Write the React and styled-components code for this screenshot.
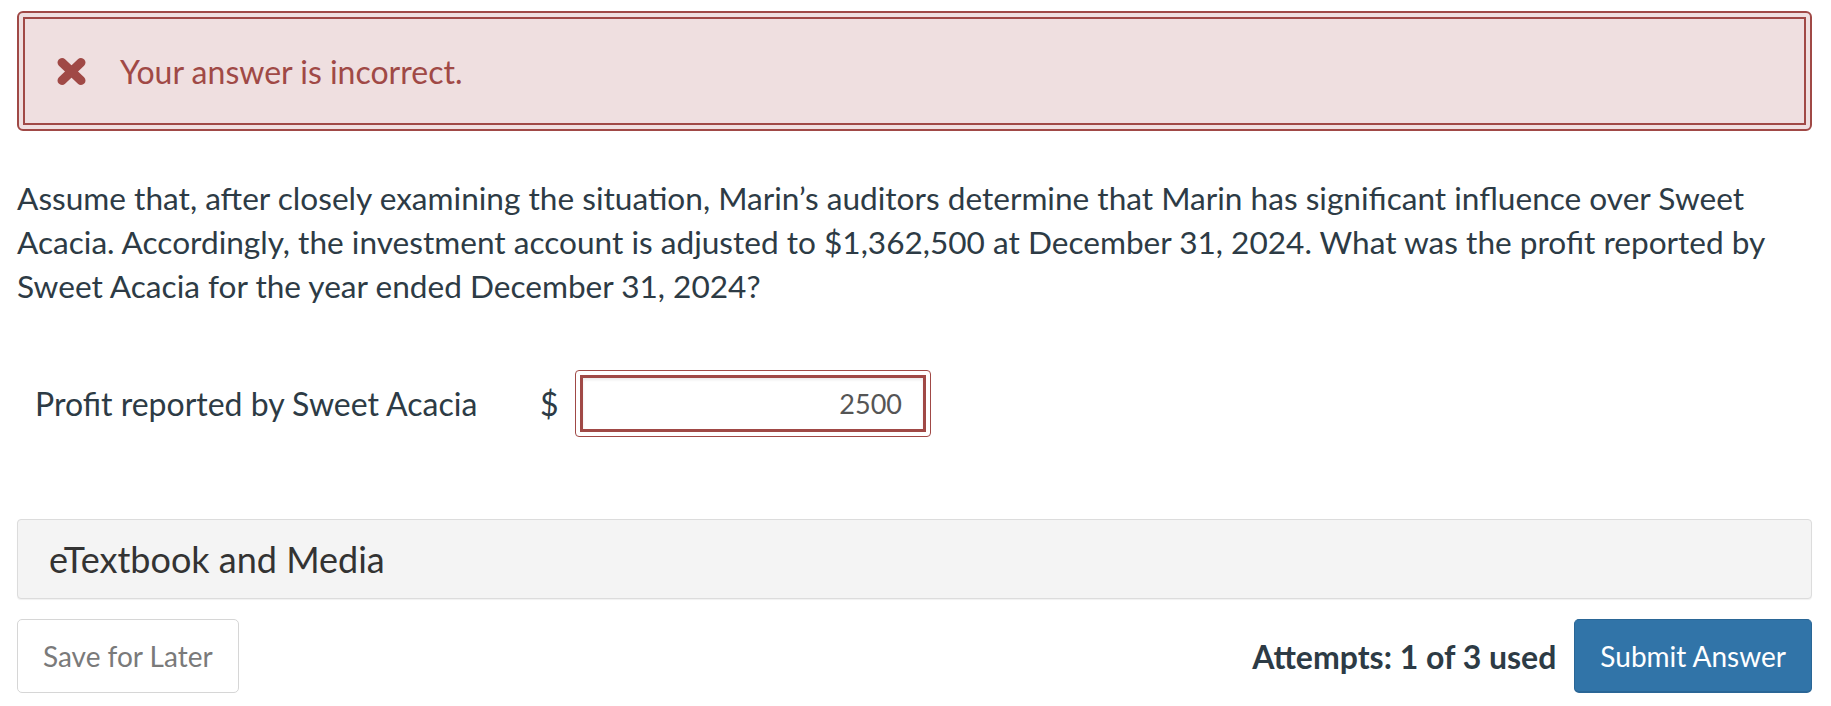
import React from 'react';
import styled, { createGlobalStyle } from 'styled-components';

const GlobalStyle = createGlobalStyle`
  body {
    margin: 0;
    background: #ffffff;
    font-family: Lato, "Noto Sans", sans-serif;
    color: #2d3b45;
  }
`;

const Page = styled.div`
  padding: 11px 19px 14px 17px;
`;

const AlertOuter = styled.div`
  border: 2px solid #a04946;
  border-radius: 6px;
  padding: 4px;
  background: #efdfe0;
`;

const AlertInner = styled.div`
  display: flex;
  align-items: center;
  height: 108px;
  box-sizing: border-box;
  border: 2px solid #a04946;
  padding-left: 32px;
  gap: 34px;
`;

const AlertText = styled.span`
  font-size: 32px;
  color: #a04946;
`;

const Question = styled.p`
  margin: 45px 0 0;
  font-size: 31.6px;
  line-height: 44px;
  color: #2d3b45;
`;

const AnswerRow = styled.div`
  display: flex;
  align-items: center;
  margin-top: 62px;
  padding-left: 18px;
`;

const Label = styled.span`
  font-size: 32px;
  width: 505px;
  color: #2d3b45;
`;

const Currency = styled.span`
  font-size: 32px;
  width: 35px;
  color: #2d3b45;
`;

const InputFrame = styled.div`
  border: 1.5px solid #a04946;
  border-radius: 4px;
  padding: 4px;
  background: #fff;
`;

const Input = styled.input`
  display: block;
  box-sizing: border-box;
  width: 346px;
  height: 57px;
  border: 3px solid #a04946;
  box-shadow: inset 0 2px 3px rgba(0, 0, 0, 0.08);
  padding: 0 21px 0 10px;
  font-family: Lato, "Noto Sans", sans-serif;
  font-size: 27px;
  color: #555;
  text-align: right;
  outline: none;
`;

const Panel = styled.div`
  margin-top: 82px;
  height: 80px;
  box-sizing: border-box;
  display: flex;
  align-items: center;
  padding-left: 31px;
  background: #f4f4f4;
  border: 1px solid #dcdcdc;
  border-radius: 4px;
  box-shadow: 0 1px 1px rgba(0, 0, 0, 0.06);
  font-size: 36px;
  color: #333;
`;

const Footer = styled.div`
  display: flex;
  align-items: center;
  justify-content: space-between;
  margin-top: 20px;
`;

const Right = styled.div`
  display: flex;
  align-items: center;
  gap: 18px;
`;

const Attempts = styled.span`
  font-size: 32px;
  font-weight: 700;
  color: #2d3b45;
`;

const Button = styled.button`
  height: 74px;
  box-sizing: border-box;
  padding: 0 25px;
  font-family: Lato, "Noto Sans", sans-serif;
  font-size: 28px;
  border-radius: 5px;
  cursor: pointer;
  color: ${(p) => (p.$primary ? '#ffffff' : '#7a7a7a')};
  background: ${(p) => (p.$primary ? '#3174a8' : '#ffffff')};
  border: ${(p) => (p.$primary ? '1px solid #2a6696' : '1.5px solid #d6d6d6')};
  border-bottom-width: ${(p) => (p.$primary ? '2px' : '1.5px')};
`;

function CrossIcon() {
  return (
    <svg width="29" height="27" viewBox="0 0 29 27">
      <path d="M5 4.5 L24 22.5 M24 4.5 L5 22.5" stroke="#a04946" strokeWidth="9" strokeLinecap="round" />
    </svg>
  );
}

export default function App() {
  return (
    <Page>
      <GlobalStyle />
      <AlertOuter>
        <AlertInner>
          <CrossIcon />
          <AlertText>Your answer is incorrect.</AlertText>
        </AlertInner>
      </AlertOuter>
      <Question>
        Assume that, after closely examining the situation, Marin’s auditors determine that Marin has significant influence over Sweet
        Acacia. Accordingly, the investment account is adjusted to $1,362,500 at December 31, 2024. What was the profit reported by
        Sweet Acacia for the year ended December 31, 2024?
      </Question>
      <AnswerRow>
        <Label>Profit reported by Sweet Acacia</Label>
        <Currency>$</Currency>
        <InputFrame>
          <Input defaultValue="2500" />
        </InputFrame>
      </AnswerRow>
      <Panel>eTextbook and Media</Panel>
      <Footer>
        <Button>Save for Later</Button>
        <Right>
          <Attempts>Attempts: 1 of 3 used</Attempts>
          <Button $primary>Submit Answer</Button>
        </Right>
      </Footer>
    </Page>
  );
}
